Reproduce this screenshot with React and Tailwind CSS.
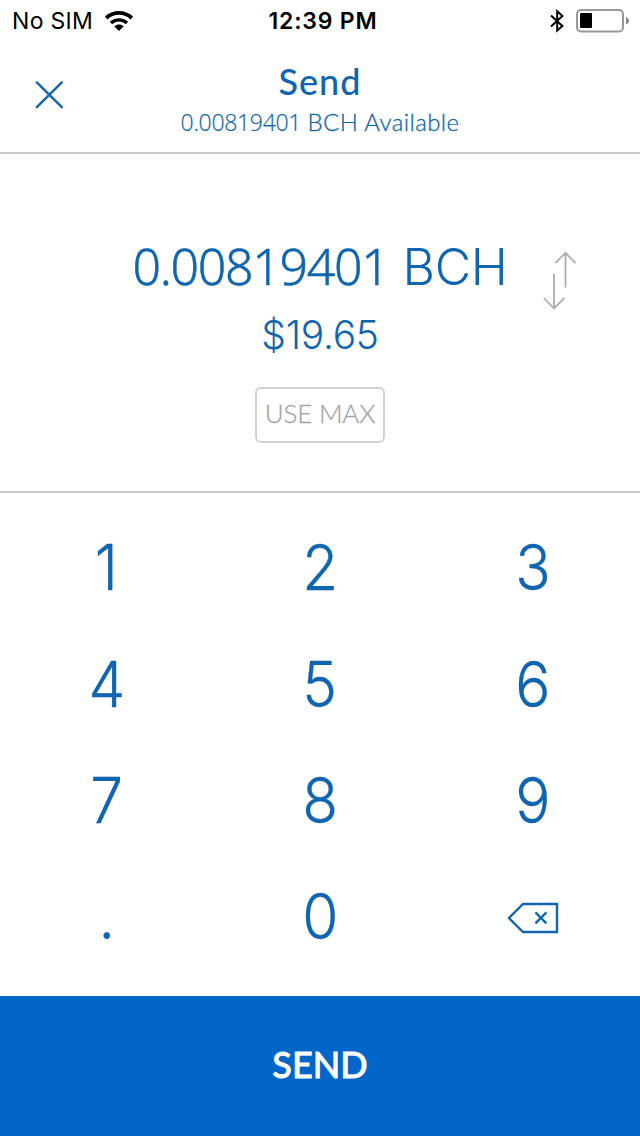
const keys = ["1", "2", "3", "4", "5", "6", "7", "8", "9", ".", "0", "delete"];

function WifiIcon() {
  return (
    <svg width="28" height="20" viewBox="0 0 28 20" fill="none" stroke="#000" strokeWidth="3.8">
      <path d="M1.2 7C8.4 0.2 19.6 0.2 26.8 7" />
      <path d="M6 12C10.5 7.8 17.5 7.8 22 12" strokeWidth="3.4" />
      <path d="M14 20L9.4 15.4C12 13 16 13 18.6 15.4Z" fill="#000" stroke="none" />
    </svg>
  );
}

function BluetoothIcon() {
  return (
    <svg width="14" height="24" viewBox="0 0 14 24" fill="none" stroke="#000" strokeWidth="2">
      <path d="M1 6.5L12.4 17L7.2 21.6V2.2L12.4 6.9L1 17.4" />
    </svg>
  );
}

function BatteryIcon() {
  return (
    <svg width="54" height="24" viewBox="0 0 54 24">
      <rect x="1" y="1" width="46" height="21.4" rx="4" fill="none" stroke="#999" strokeWidth="2" />
      <rect x="4" y="4" width="12" height="15" rx="1" fill="#000" />
      <path d="M50 8C54 9.5 54 14 50 15.5Z" fill="#8a8a8a" />
    </svg>
  );
}

function CloseIcon() {
  return (
    <svg width="28" height="28" viewBox="0 0 28 28" fill="none" stroke="#1266ae" strokeWidth="2.4" strokeLinecap="round">
      <path d="M1.8 1.4L26.8 26.2M26.8 1.4L1.8 26.2" />
    </svg>
  );
}

function SwapIcon() {
  return (
    <svg width="34" height="60" viewBox="0 0 34 60" fill="none" stroke="#adadad" strokeWidth="1.8">
      <path d="M12 23V57.5M2 47L12 57.5L22.5 47" />
      <path d="M23.5 36.5V1.8M13.2 12.2L23.5 1.8L33.5 12.2" />
    </svg>
  );
}

function DeleteIcon() {
  return (
    <svg width="52" height="32" viewBox="0 0 52 32" fill="none" stroke="#1266ae" strokeWidth="2.4">
      <path d="M16 2H50V30H16L2 16Z" />
      <path d="M28.4 10.4L39.4 21.4M39.4 10.4L28.4 21.4" />
    </svg>
  );
}

export default function App() {
  return (
    <div className="flex h-[1136px] w-[640px] flex-col bg-white text-[#0f65b0]">
      {/* Status bar */}
      <div className="grid h-10 grid-cols-3 items-center pr-[10px] pl-[12px] font-[Inter] text-black">
        <div className="flex items-center gap-3 pt-px text-[23px] leading-10 tracking-[0.3px]">
          <span>No SIM</span>
          <WifiIcon />
        </div>
        <div className="pt-px pl-1 text-center text-[23px] leading-10 font-semibold tracking-[0.8px]">12:39 PM</div>
        <div className="flex items-center justify-end gap-3">
          <BluetoothIcon />
          <BatteryIcon />
        </div>
      </div>

      {/* Header */}
      <header className="grid h-[114px] grid-cols-[100px_1fr_100px] border-b-2 border-[#cbcbcb]">
        <button className="mt-[41px] ml-[35px] self-start">
          <CloseIcon />
        </button>
        <div className="pt-[19px] text-center">
          <h1 className="font-[Lato] text-[36px] leading-[44px] font-medium tracking-[1px]">Send</h1>
          <p className="text-[24px] leading-[38px] font-light whitespace-nowrap">
            <span className="font-['Open_Sans'] text-[23px] tracking-[-0.3px] [-webkit-text-stroke:0.2px]">0.00819401</span>{" "}
            <span className="font-[Lato] tracking-[0.4px] [-webkit-text-stroke:0.3px]">BCH Available</span>
          </p>
        </div>
      </header>

      {/* Amount */}
      <section className="grid h-[339px] grid-cols-[100px_1fr_100px] border-b-2 border-[#cbcbcb] font-[Inter] font-light">
        <div className="col-start-2 flex flex-col items-center">
          <div className="mt-[82px] text-[50px] leading-[60px] whitespace-nowrap">
            <span className="font-['Noto_Sans'] tracking-[-1.3px] [-webkit-text-stroke:0.5px]">0.00819401</span>
            <span className="ml-3.5 tracking-[-0.3px]">BCH</span>
          </div>
          <div className="mt-[13px] text-[39px] leading-[50px] tracking-[-0.3px]">$19.65</div>
          <button className="mt-[27px] h-14 w-[130px] rounded-md border-2 border-[#d2d2d2] pb-[3px] font-[Lato] text-[26px] leading-[49px] tracking-[-0.2px] whitespace-nowrap text-[#a2a4a6] [-webkit-text-stroke:0.3px]">
            USE MAX
          </button>
        </div>
        <button className="mt-[97px] ml-[2px] self-start">
          <SwapIcon />
        </button>
      </section>

      {/* Keypad */}
      <div className="grid h-[503px] grid-cols-3 grid-rows-[117px_116px_116px_116px] pt-[16px] font-[Inter] text-[63px] font-light">
        {keys.map((key) => (
          <button key={key} className="flex items-center justify-center">
            {key === "delete" ? (
              <span className="pt-1">
                <DeleteIcon />
              </span>
            ) : (
              <span className="scale-x-[0.93] [-webkit-text-stroke:0.3px]">{key}</span>
            )}
          </button>
        ))}
      </div>

      <button className="h-[140px] bg-[#0265c8] pb-1 font-[Lato] text-[36px] font-medium text-white [-webkit-text-stroke:0.8px]">SEND</button>
    </div>
  );
}
